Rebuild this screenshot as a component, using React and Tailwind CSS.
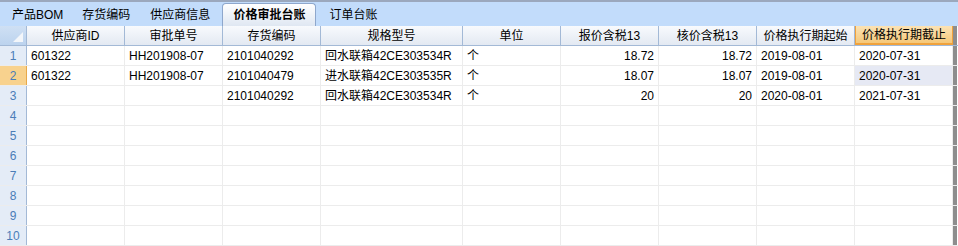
import React from 'react';

const cols = [
  { title: '供应商ID', w: 'w-[98px]' },
  { title: '审批单号', w: 'w-[98px]' },
  { title: '存货编码', w: 'w-[98px]' },
  { title: '规格型号', w: 'w-[142px]' },
  { title: '单位', w: 'w-[98px]' },
  { title: '报价含税13', w: 'w-[98px]', num: true },
  { title: '核价含税13', w: 'w-[98px]', num: true },
  { title: '价格执行期起始', w: 'w-[98px]' },
  { title: '价格执行期截止', w: 'w-[98px]' },
];

const rows = [
  ['601322', 'HH201908-07', '2101040292', '回水联箱42CE303534R', '个', '18.72', '18.72', '2019-08-01', '2020-07-31'],
  ['601322', 'HH201908-07', '2101040479', '进水联箱42CE303535R', '个', '18.07', '18.07', '2019-08-01', '2020-07-31'],
  ['', '', '2101040292', '回水联箱42CE303534R', '个', '20', '20', '2020-08-01', '2021-07-31'],
];

const tabs = ['产品BOM', '存货编码', '供应商信息', '价格审批台账', '订单台账'];

const App = () => {
  const allRows = Array.from({ length: 10 }, (_, i) => rows[i] || Array(9).fill(''));

  return (
    <div className="w-[958px] h-[246px] overflow-hidden bg-white text-[12px] text-black" style={{ fontFamily: '"Liberation Sans", "Noto Sans CJK SC", sans-serif' }}>
      <div className="h-[2px] bg-[#9ba8bd]" />
      <div className="h-[24px] bg-[#c2dcfb] flex items-end pl-[3px]">
        {tabs.map((t, i) =>
          i === 3 ? (
            <div key={t} className="h-[23px] px-[10px] ml-[2px] mr-[3px] flex items-center rounded-t-[4px] border border-b-0 border-[#8ea7cc] bg-gradient-to-b from-[#ffffff] to-[#dfe7f2] font-bold">
              {t}
            </div>
          ) : (
            <div key={t} className={`h-[23px] flex items-center ${i === 0 ? 'px-[9px]' : 'px-[10px]'}`}>
              {t}
            </div>
          )
        )}
      </div>
      <div className="flex h-[20px] border-b border-[#a3b9d6]">
        <div className="w-[27px] h-full relative bg-gradient-to-b from-[#cfe0f4] to-[#bcd3ee] border-r border-[#a3b9d6]">
          <div className="absolute right-[3px] bottom-[3px] w-0 h-0 border-l-[10px] border-l-transparent border-b-[10px] border-b-[#f3f6fa]" />
        </div>
        {cols.map((c, i) => (
          <div
            key={c.title}
            className={`${c.w} h-full flex items-center justify-center border-r ${
              i === 8
                ? 'bg-gradient-to-b from-[#fbe2b4] to-[#f5c879] border-[#f0a23c] border-l border-b-2 -mb-px'
                : 'bg-gradient-to-b from-[#f8fafd] to-[#e3e9f2] border-[#a3b9d6]'
            }`}
          >
            {c.title}
          </div>
        ))}
        <div className="w-[4px] h-full bg-[#8d8d8d]" />
      </div>
      {allRows.map((r, ri) => (
        <div key={ri} className="flex h-[20px] border-b border-[#ececec]">
          <div
            className={`w-[27px] h-full flex items-center justify-center border-r ${
              ri === 1 ? 'bg-[#f8d28e] text-[#4b7db7] border-[#e7a94b]' : 'bg-[#e4ecf7] text-[#4b7db7] border-[#a3b9d6]'
            }`}
          >
            {ri + 1}
          </div>
          {cols.map((c, ci) => (
            <div
              key={ci}
              className={`${c.w} h-full flex items-center px-[4px] border-r border-[#ececec] ${c.num ? 'justify-end' : ''} ${
                ri === 1 && ci === 8 ? 'bg-[#e6e9f4]' : ''
              }`}
            >
              {r[ci]}
            </div>
          ))}
          <div className="w-[4px] h-full bg-[#8d8d8d]" />
        </div>
      ))}
    </div>
  );
};

export default App;
